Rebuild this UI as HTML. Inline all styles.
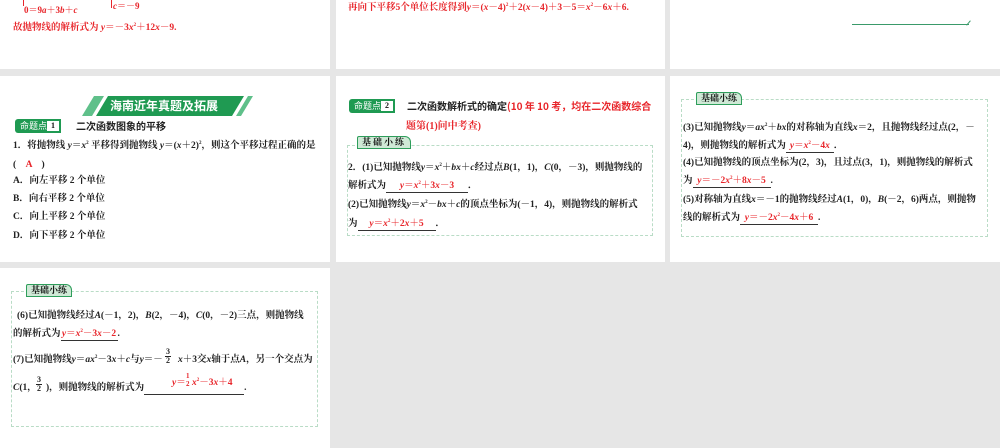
<!DOCTYPE html>
<html><head><meta charset="utf-8">
<style>
*{margin:0;padding:0;box-sizing:border-box}
body{width:1000px;height:448px;background:#e6e6e6;position:relative;overflow:hidden;font-family:"Liberation Serif","Noto Serif CJK SC",serif;font-weight:bold;font-size:9.5px;color:#222}
.p{position:absolute;background:#fff}
.t{position:absolute;white-space:nowrap;line-height:12px}
.r{color:#e8262b}
.box{position:absolute;border:1px dashed #b9dcc6}
.tag{position:absolute;background:#cfe9d6;border:1px solid #2e9e5b;border-radius:2px 6px 0 0;font-size:9px;padding:0 4px;line-height:11px;color:#111}
.mt{position:absolute;height:14px;width:46px;background:#1f9a52;color:#fff;font-size:9px;line-height:14px;padding-left:5px;border-radius:3px 0 0 3px;font-family:"Noto Sans CJK SC",sans-serif;font-weight:normal}
.mt span{position:absolute;right:2px;top:2px;width:12px;height:10px;background:#fff;color:#111;font-size:8px;line-height:10px;text-align:center;font-family:"Liberation Serif",serif;font-weight:bold}
.u{display:inline-block;border-bottom:1px solid #333;color:#e8262b;text-align:center;line-height:11px}
i{font-style:italic}
sup{font-size:5px;line-height:0}
</style></head><body>
<div class="p" style="left:0;top:0;width:330px;height:69px"></div>
<div class="p" style="left:336px;top:0;width:329px;height:69px"></div>
<div class="p" style="left:670px;top:0;width:330px;height:69px"></div>
<div class="p" style="left:0;top:76px;width:330px;height:186px"></div>
<div class="p" style="left:336px;top:76px;width:329px;height:186px"></div>
<div class="p" style="left:670px;top:76px;width:330px;height:186px"></div>
<div class="p" style="left:0;top:268px;width:330px;height:180px"></div>

<div style="position:absolute;left:23px;top:0;width:1px;height:6px;background:#e8262b"></div>
<div style="position:absolute;left:111px;top:0;width:1px;height:8px;background:#e8262b"></div>
<div class="t r" style="left:24px;top:4px;font-size:9px">0＝9<i>a</i>＋3<i>b</i>＋<i>c</i></div>
<div class="t r" style="left:113px;top:0px;font-size:9px"><i>c</i>＝－9</div>
<div class="t r" style="left:13px;top:22px">故抛物线的解析式为 <i>y</i>＝－3<i>x</i><sup>2</sup>＋12<i>x</i>－9.</div>
<div class="t r" style="left:348px;top:2px">再向下平移5个单位长度得到<i>y</i>＝(<i>x</i>－4)<sup>2</sup>＋2(<i>x</i>－4)＋3－5＝<i>x</i><sup>2</sup>－6<i>x</i>＋6.</div>
<div style="position:absolute;left:852px;top:24px;width:117px;height:1px;background:#3a9a6a"></div>
<div style="position:absolute;left:968px;top:20px;width:1px;height:6px;background:#3a9a6a;transform:rotate(40deg)"></div>

<svg style="position:absolute;left:78px;top:95px" width="175" height="22"><polygon points="4,21 16,1 26,1 14,21" fill="#5fc08a"/><polygon points="18,21 30,1 166,1 154,21" fill="#1f9a52"/><polygon points="158,21 170,1 175,1 163,21" fill="#5fc08a"/></svg>
<div class="t" style="left:110px;top:98px;color:#fff;font-size:12px;line-height:16px;font-family:'Noto Sans CJK SC',sans-serif">海南近年真题及拓展</div>
<div class="mt" style="left:15px;top:119px">命题点<span>1</span></div>
<div class="t" style="left:76px;top:120px;font-size:10px;font-family:'Noto Sans CJK SC',sans-serif">二次函数图象的平移</div>
<div class="t" style="left:13px;top:140px">1．将抛物线 <i>y</i>＝<i>x</i><sup>2</sup> 平移得到抛物线 <i>y</i>＝(<i>x</i>＋2)<sup>2</sup>，则这个平移过程正确的是</div>
<div class="t" style="left:13px;top:159px">(　<span class="r">A</span>　)</div>
<div class="t" style="left:13px;top:175px">A．向左平移 2 个单位</div>
<div class="t" style="left:13px;top:193px">B．向右平移 2 个单位</div>
<div class="t" style="left:13px;top:211px">C．向上平移 2 个单位</div>
<div class="t" style="left:13px;top:230px">D．向下平移 2 个单位</div>

<div class="mt" style="left:349px;top:99px">命题点<span>2</span></div>
<div class="t" style="left:407px;top:100px;font-size:10px;font-family:'Noto Sans CJK SC',sans-serif">二次函数解析式的确定<span class="r">(10 年 10 考，均在二次函数综合</span></div>
<div class="t r" style="left:406px;top:121px;font-size:10px">题第(1)问中考查)</div>
<div class="box" style="left:347px;top:145px;width:306px;height:91px"></div>
<div class="tag" style="left:357px;top:136px;letter-spacing:2px">基础小练</div>
<div class="t" style="left:348px;top:162px">2．(1)已知抛物线<i>y</i>＝<i>x</i><sup>2</sup>＋<i>bx</i>＋<i>c</i>经过点<i>B</i>(1，1)，<i>C</i>(0，－3)，则抛物线的</div>
<div class="t" style="left:348px;top:180px">解析式为<span class="u" style="width:82px"><i>y</i>＝<i>x</i><sup>2</sup>＋3<i>x</i>－3</span>．</div>
<div class="t" style="left:348px;top:199px">(2)已知抛物线<i>y</i>＝<i>x</i><sup>2</sup>－<i>bx</i>＋<i>c</i>的顶点坐标为(－1，4)，则抛物线的解析式</div>
<div class="t" style="left:348px;top:218px">为<span class="u" style="width:78px"><i>y</i>＝<i>x</i><sup>2</sup>＋2<i>x</i>＋5</span>．</div>

<div class="box" style="left:681px;top:99px;width:307px;height:138px"></div>
<div class="tag" style="left:696px;top:92px">基础小练</div>
<div class="t" style="left:683px;top:122px">(3)已知抛物线<i>y</i>＝<i>ax</i><sup>2</sup>＋<i>bx</i>的对称轴为直线<i>x</i>＝2，且抛物线经过点(2，－</div>
<div class="t" style="left:683px;top:140px">4)，则抛物线的解析式为<span class="u" style="width:48px"><i>y</i>＝<i>x</i><sup>2</sup>－4<i>x</i></span>．</div>
<div class="t" style="left:683px;top:157px">(4)已知抛物线的顶点坐标为(2，3)，且过点(3，1)，则抛物线的解析式</div>
<div class="t" style="left:683px;top:175px">为<span class="u" style="width:78px"><i>y</i>＝－2<i>x</i><sup>2</sup>＋8<i>x</i>－5</span>.</div>
<div class="t" style="left:683px;top:194px">(5)对称轴为直线<i>x</i>＝－1的抛物线经过<i>A</i>(1，0)，<i>B</i>(－2，6)两点，则抛物</div>
<div class="t" style="left:683px;top:212px">线的解析式为<span class="u" style="width:78px"><i>y</i>＝－2<i>x</i><sup>2</sup>－4<i>x</i>＋6</span>.</div>

<div class="box" style="left:11px;top:291px;width:307px;height:136px"></div>
<div class="tag" style="left:26px;top:284px">基础小练</div>
<div class="t" style="left:17px;top:310px">(6)已知抛物线经过<i>A</i>(－1，2)，<i>B</i>(2，－4)，<i>C</i>(0，－2)三点，则抛物线</div>
<div class="t" style="left:13px;top:328px">的解析式为<span class="u" style="width:57px"><i>y</i>＝<i>x</i><sup>2</sup>－3<i>x</i>－2</span>.</div>
<div class="t" style="left:13px;top:354px">(7)已知抛物线<i>y</i>＝<i>ax</i><sup>2</sup>－3<i>x</i>＋<i>c</i>与<i>y</i>＝－</div>
<div class="t" style="left:166px;top:347px;font-size:8px;line-height:9px;text-align:center">3<br>2</div>
<div style="position:absolute;left:165px;top:356px;width:6px;height:1px;background:#222"></div>
<div class="t" style="left:178px;top:354px"><i>x</i>＋3交<i>x</i>轴于点<i>A</i>，另一个交点为</div>
<div class="t" style="left:13px;top:382px"><i>C</i>(1，</div>
<div class="t" style="left:37px;top:375px;font-size:8px;line-height:9px">3<br>2</div>
<div style="position:absolute;left:36px;top:384px;width:6px;height:1px;background:#222"></div>
<div class="t" style="left:46px;top:382px">)，则抛物线的解析式为<span class="u" style="width:100px">&nbsp;</span>.</div>
<div class="t r" style="left:172px;top:377px"><i>y</i>＝</div>
<div class="t r" style="left:186px;top:372px;font-size:7px;line-height:8px">1<br>2</div>
<div class="t r" style="left:192px;top:377px"><i>x</i><sup>2</sup>－3<i>x</i>＋4</div>
</body></html>
